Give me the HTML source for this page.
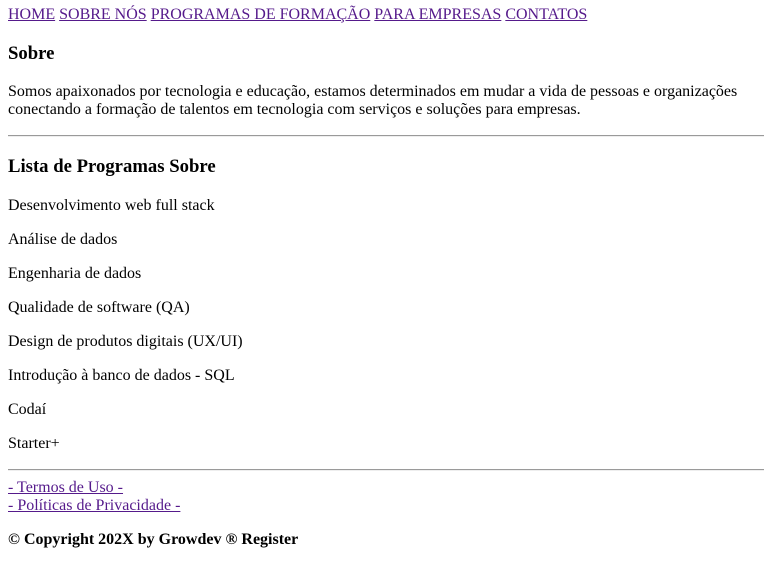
<!DOCTYPE html>
<html lang="pt-BR">
<head>
<meta charset="utf-8">
<style>
  body { margin: 6px 0 8px 8px; font-family: "Liberation Serif", serif; font-size: 16px; color: #000; background: #fff; }
  a { color: #551A8B; text-decoration: underline; }
  h3 { font-size: 18.72px; margin: 18.72px 0; }
  p { margin: 16px 0; line-height: normal; }
  p.intro { margin-right: 8px; }
  hr { margin: 8px 0; border: 0; border-top: 1px solid #9a9a9a; border-bottom: 1px solid #eee; }
  .links p { margin: 0; }
</style>
</head>
<body>
<nav><a href="#">HOME</a> <a href="#">SOBRE NÓS</a> <a href="#">PROGRAMAS DE FORMAÇÃO</a> <a href="#">PARA EMPRESAS</a> <a href="#">CONTATOS</a></nav>
<h3>Sobre</h3>
<p class="intro">Somos apaixonados por tecnologia e educação, estamos determinados em mudar a vida de pessoas e organizações conectando a formação de talentos em tecnologia com serviços e soluções para empresas.</p>
<hr>
<h3>Lista de Programas Sobre</h3>
<p>Desenvolvimento web full stack</p>
<p>Análise de dados</p>
<p>Engenharia de dados</p>
<p>Qualidade de software (QA)</p>
<p>Design de produtos digitais (UX/UI)</p>
<p>Introdução à banco de dados - SQL</p>
<p>Codaí</p>
<p>Starter+</p>
<hr>
<div class="links">
<p><a href="#">- Termos de Uso -</a></p>
<p><a href="#">- Políticas de Privacidade -</a></p>
</div>
<p><strong>© Copyright 202X by Growdev ® Register</strong></p>
</body>
</html>
